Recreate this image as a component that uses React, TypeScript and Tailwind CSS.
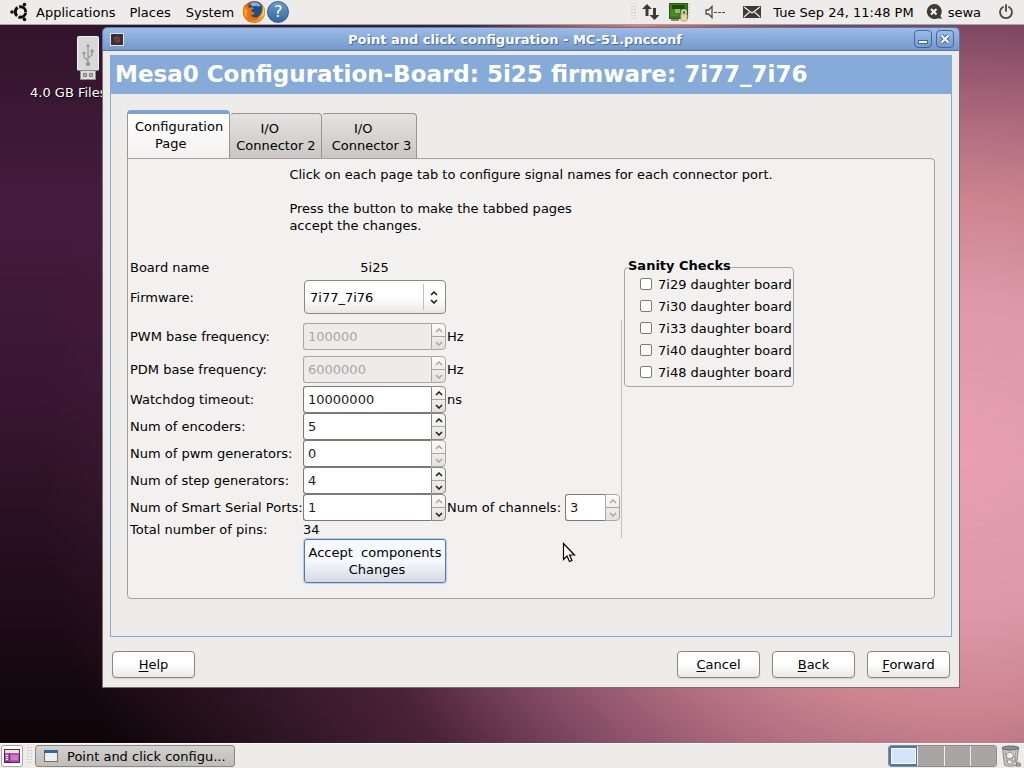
import { useState, type ReactNode } from 'react'

const TABS = ['Configuration\nPage    ', 'I/O   \nConnector 2', 'I/O   \n Connector 3']

const DAUGHTER_BOARDS = ['7i29', '7i30', '7i33', '7i40', '7i48']

function UbuntuIcon() {
  return (
    <svg width="18" height="20" viewBox="0 0 18 20" aria-hidden="true">
      <circle cx="10.5" cy="10" r="5.2" fill="none" stroke="#111" strokeWidth="3" strokeDasharray="9.4 1.5" strokeDashoffset="-0.7" />
      <circle cx="2" cy="10" r="1.8" fill="#111" />
      <circle cx="14.5" cy="2.6" r="1.8" fill="#111" />
      <circle cx="14.5" cy="17.4" r="1.8" fill="#111" />
    </svg>
  )
}

function FirefoxIcon() {
  return (
    <svg width="24" height="24" viewBox="0 0 24 24" aria-hidden="true">
      <circle cx="12" cy="12" r="11" fill="#e2600f" />
      <circle cx="13" cy="9.5" r="8" fill="#1f4e8f" />
      <path d="M8 4c3-3 9-2 11 2-2 0-3 1-4 0s-3 1-5 0z" fill="#7fb4e2" />
      <path d="M20 4c3 4 4 9 1 13-3 5-10 7-15 4 6 1 10-2 11-5 3-2 4-7 3-12z" fill="#f7a81b" />
      <path d="M21.500 7c1 4 1 8-2 11 1-3 2-7 2-11z" fill="#fbe04a" />
      <path d="M3 4c-3 5-3 12 2 16 5 3 11 1 13-3-4 2-8 1-9-2 2 0 3-1 4-2-1-1-3-1-4-2 0-1 2-2 3-3-2-1-4-1-5 0-1-1-1-2 0-3-2 0-3 1-4 2z" fill="#e8730f" />
      <path d="M3 6c-2 5-1 10 3 13-2-4-1-6 0-8-2-1-3-3-3-5z" fill="#f5a32a" />
    </svg>
  )
}

function HelpIcon() {
  return (
    <span className="flex size-[22px] items-center justify-center rounded-full border border-[#2c5f94] bg-linear-to-b from-[#6a9dcb] to-[#33699f] text-base text-white">
      ?
    </span>
  )
}

function TransferIcon() {
  return (
    <svg width="18" height="18" viewBox="0 0 18 18" fill="#3c3b37" aria-hidden="true">
      <path d="M5 1l5 5H6.500v7h-3V6H0z" />
      <path d="M12.500 17l-5-5H11V5h3v7h3.500z" />
    </svg>
  )
}

function BoardIcon() {
  return (
    <svg width="22" height="20" viewBox="0 0 22 20" aria-hidden="true">
      <path d="M19 2h2M19 5h2M19 8h2M19 11h2M19 14h2" stroke="#c4c4c4" />
      <rect x="0.500" y="1.500" width="18" height="15" fill="#3f7d1c" stroke="#2c5a12" />
      <rect x="3" y="3" width="13" height="4" fill="#1c4a0c" />
      <rect x="6" y="7" width="5" height="4" fill="#8fbd5c" />
      <path d="M2 9h3M2 11h3M2 13h7" stroke="#5f9a38" />
      <path d="M2 17h8v2H2z" fill="#8a8b6a" />
      <path d="M13 12v-2a2 2 0 0 1 4 0v2" fill="none" stroke="#ddd" strokeWidth="1.500" />
      <rect x="12" y="12" width="6" height="7" rx="1" fill="#e9d3a5" stroke="#c4a877" />
    </svg>
  )
}

function SpeakerIcon() {
  return (
    <svg width="21" height="14" viewBox="0 0 21 14" fill="none" stroke="#4c4b47" aria-hidden="true">
      <path d="M1 5h2.500L7 1.500v11L3.500 9H1z" strokeWidth="1.300" />
      <path d="M9 7.500h3M13 7.500h3M17 7.500h3" />
    </svg>
  )
}

function MailIcon() {
  return (
    <svg width="18" height="12" viewBox="0 0 18 12" aria-hidden="true">
      <rect width="18" height="12" fill="#3c3b37" />
      <path d="M1 1l8 6 8-6M1 11l5.500-5M17 11l-5.500-5" fill="none" stroke="#edecea" strokeWidth="1.200" />
    </svg>
  )
}

function ChatIcon() {
  return (
    <svg width="17" height="16" viewBox="0 0 17 16" aria-hidden="true">
      <path d="M8 0a7.500 7.500 0 1 0 3 14.500h5.500c-1.500-1-2-2-2-3A7.500 7.500 0 0 0 8 0z" fill="#3c3b37" />
      <path d="M5 5l5.500 5.500M10.500 5L5 10.500" stroke="#fff" strokeWidth="2" />
    </svg>
  )
}

function PowerIcon() {
  return (
    <svg width="16" height="16" viewBox="0 0 16 16" fill="none" stroke="#4a4945" strokeWidth="1.800" strokeLinecap="round" aria-hidden="true">
      <path d="M5 3a6 6 0 1 0 6 0M8 1v6" />
    </svg>
  )
}

function UsbDriveIcon() {
  return (
    <svg width="22" height="45" viewBox="0 0 22 45" aria-hidden="true">
      <rect x="3.500" y="34.500" width="15" height="9" fill="#dcdcdc" stroke="#8d8d8d" />
      <path d="M6.500 37.500h3v3h-3zM12.500 37.500h3v3h-3z" fill="#bbb" stroke="#777" />
      <rect x="0.500" y="0.500" width="21" height="34" rx="1" fill="#d8d8d8" stroke="#f4f4f4" />
      <path d="M1 34.500h20" stroke="#8d8d8d" />
      <g fill="none" stroke="#999" strokeWidth="1.300">
        <path d="M11 28V10M11 25l-4-4v-4M11 22l4-3v-4" />
      </g>
      <g fill="#999">
        <circle cx="11" cy="28" r="2.200" />
        <circle cx="7" cy="17" r="1.600" />
        <path d="M11 7l2 4H9zM13.500 13.500h3v3h-3z" />
      </g>
    </svg>
  )
}

function ShowDesktopIcon() {
  return (
    <svg width="16" height="14" viewBox="0 0 16 14" aria-hidden="true">
      <rect x="0.500" y="0.500" width="15" height="13" fill="#b24fb0" stroke="#5b2459" />
      <rect x="1" y="1" width="14" height="3" fill="#e8e4cf" />
      <path d="M2 6h2v1H2zM2 8h2v1H2zM2 10h2v1H2z" fill="#fff" />
      <path d="M5.500 4v8.500H1" fill="none" stroke="#7c317a" />
      <rect x="7" y="6" width="7" height="5" fill="#cb7ac9" />
    </svg>
  )
}

function TaskWindowIcon() {
  return (
    <svg width="14" height="12" viewBox="0 0 14 12" aria-hidden="true">
      <rect x="0.500" y="0.500" width="13" height="11" fill="#eeeeec" stroke="#6e6e6a" />
      <rect width="14" height="3" fill="#3465a4" />
    </svg>
  )
}

function TrashIcon() {
  return (
    <svg width="20" height="22" viewBox="0 0 20 22" aria-hidden="true">
      <path d="M1.500 3l2 17c3 1.500 9 1.500 12 0l2-17z" fill="#c9cac7" stroke="#8a8b88" />
      <path d="M5 9l4-2 4 3-3 4-4-1zM6 15l4 0 2 4-5 0zM12 12l3 1-1 4-3-2z" fill="#edeeec" stroke="#969794" />
      <path d="M4 6l2 12M15 6l-2 12M9 6v2" stroke="#9fa09d" />
      <ellipse cx="9.500" cy="3" rx="8.500" ry="2" fill="#8f908d" stroke="#666" />
      <path d="M15 21l1-3 3 0 0.500 3z" fill="#b5b6b3" stroke="#777" />
    </svg>
  )
}

function Grip() {
  return (
    <svg width="5" height="18" viewBox="0 0 5 18" aria-hidden="true">
      <path d="M1 0v18M4 0v18" stroke="#b5b3b0" strokeDasharray="1 2" />
    </svg>
  )
}

function Chevron({ up, dim }: { up?: boolean; dim?: boolean }) {
  return (
    <svg width="8" height="5" viewBox="0 0 8 5" fill="none" stroke={dim ? '#a9a7a4' : '#1c1c1c'} strokeWidth="1.500" aria-hidden="true">
      <path d={up ? 'M1 4l3-3 3 3' : 'M1 1l3 3 3-3'} />
    </svg>
  )
}

function SpinBox({
  id,
  value,
  disabled,
  upDim,
  downDim,
  className,
}: {
  id: string
  value: string
  disabled?: boolean
  upDim?: boolean
  downDim?: boolean
  className: string
}) {
  return (
    <div className={`flex h-[27px] ${className}`}>
      <input
        id={id}
        type="text"
        defaultValue={value}
        disabled={disabled}
        className={`min-w-0 flex-1 rounded-l-[3px] border border-r-0 px-1 ${
          disabled ? 'border-[#a9a7a4] bg-[#edecea] text-[#a9a7a4]' : 'border-[#7d7974] bg-white text-[#1c1c1c]'
        }`}
      />
      <div
        className={`flex w-[15px] flex-col rounded-r-[4px] border bg-linear-to-b from-[#fbfbfa] to-[#e2e1df] ${
          upDim && downDim ? 'border-[#a9a7a4]' : 'border-[#8b8783]'
        }`}
      >
        <button type="button" aria-label="Increase" disabled={upDim} className="flex flex-1 items-center justify-center">
          <Chevron up dim={upDim} />
        </button>
        <button
          type="button"
          aria-label="Decrease"
          disabled={downDim}
          className="flex flex-1 items-center justify-center border-t border-[#a9a7a4]"
        >
          <Chevron dim={downDim} />
        </button>
      </div>
    </div>
  )
}

function SpinRow({
  id,
  label,
  unit,
  className = '',
  children,
  ...spin
}: {
  id: string
  label: string
  value: string
  unit?: string
  disabled?: boolean
  upDim?: boolean
  downDim?: boolean
  className?: string
  children?: ReactNode
}) {
  return (
    <div className={`flex items-center ${className}`}>
      <label htmlFor={id} className="w-[173px] shrink-0 whitespace-nowrap">
        {label}
      </label>
      <SpinBox id={id} className="w-[143px] shrink-0" {...spin} />
      {unit && <span className="ml-px">{unit}</span>}
      {children}
    </div>
  )
}

function WizardButton({ label }: { label: string }) {
  return (
    <button
      type="button"
      className="h-[27px] w-[83px] rounded-[4px] border border-[#8b8783] bg-linear-to-b from-white from-50% to-[#e9e8e6] shadow-[0_1px_1px_#d6d4d1]"
    >
      <span className="underline underline-offset-2">{label[0]}</span>
      {label.slice(1)}
    </button>
  )
}

function TopPanel() {
  return (
    <header className="flex h-[25px] shrink-0 items-center border-b border-[#a5a39f] bg-[#edecea] px-[10px]">
      <nav className="flex items-center">
        <UbuntuIcon />
        <button type="button" className="ml-2">Applications</button>
        <button type="button" className="ml-[14px]">Places</button>
        <button type="button" className="ml-[15px]">System</button>
        <button type="button" aria-label="Firefox" className="ml-2"><FirefoxIcon /></button>
        <button type="button" aria-label="Help" className="ml-px"><HelpIcon /></button>
      </nav>
      <div className="ml-auto flex items-center">
        <Grip />
        <span className="ml-[6px]"><TransferIcon /></span>
        <span className="ml-[9px]"><BoardIcon /></span>
        <span className="ml-[14px]"><SpeakerIcon /></span>
        <span className="ml-[17px]"><MailIcon /></span>
        <span className="ml-3">Tue Sep 24, 11:48 PM</span>
        <span className="ml-3"><ChatIcon /></span>
        <span className="ml-[5px]">sewa</span>
        <button type="button" aria-label="Power" className="ml-[17px]"><PowerIcon /></button>
      </div>
    </header>
  )
}

function TitleBar() {
  const button =
    'flex size-[18px] items-center justify-center rounded-[4px] border border-[#40699c] bg-linear-to-b from-[#9dbde6] to-[#7399cc]'
  return (
    <div className="flex h-6 shrink-0 items-center gap-1 rounded-t-[5px] border border-[#5079ad] bg-linear-to-b from-[#9cbce6] to-[#7599cc] pr-[5px] pl-[7px]">
      <svg width="14" height="13" viewBox="0 0 14 13" aria-hidden="true">
        <rect x="0.500" y="0.500" width="13" height="12" fill="#333" stroke="#e4e1dc" />
        <circle cx="7" cy="6.500" r="2.500" fill="none" stroke="#d03a3a" />
        <path d="M5.200 4.700l3.600 3.600" stroke="#d03a3a" />
      </svg>
      <h2 className="flex-1 pr-2 text-center font-bold text-white [text-shadow:1px_1px_1px_#3f689b]">
        Point and click configuration - MC-51.pncconf
      </h2>
      <button type="button" aria-label="Minimize" className={button}>
        <svg width="10" height="10" viewBox="0 0 10 10" aria-hidden="true">
          <rect x="0.500" y="6.500" width="9" height="3" fill="#fff" stroke="#40699c" />
        </svg>
      </button>
      <button type="button" aria-label="Close" className={button}>
        <svg width="10" height="10" viewBox="0 0 10 10" aria-hidden="true">
          <path d="M1.500 1.500l7 7M8.500 1.500l-7 7" stroke="#40699c" strokeWidth="4" />
          <path d="M1.500 1.500l7 7M8.500 1.500l-7 7" stroke="#fff" strokeWidth="2" />
        </svg>
      </button>
    </div>
  )
}

function TabBar({ active, onSelect }: { active: number; onSelect: (i: number) => void }) {
  return (
    <div role="tablist" className="flex items-end">
      {TABS.map((tab, i) => (
        <button
          key={tab}
          type="button"
          role="tab"
          aria-selected={i === active}
          onClick={() => onSelect(i)}
          className={`rounded-t-[4px] border leading-[17px] whitespace-pre ${
            i === active
              ? '-mb-px h-[49px] border-t-4 border-x-[#979592] border-t-[#7ba3d6] border-b-transparent bg-linear-to-b from-white to-[#f2f1ef] pr-[6px] pb-[3px] pl-[7px]'
              : 'h-[45px] border-b-0 border-[#979592] border-l-transparent bg-linear-to-b from-[#e4e3e1] to-[#c9c7c4] px-[5px] pt-[2px]'
          }`}
        >
          {tab}
        </button>
      ))}
    </div>
  )
}

function BoardForm() {
  return (
    <div className="w-[491px] shrink-0">
      <div className="flex h-[18px] items-center">
        <span className="w-[173px]">Board name</span>
        <span className="w-[143px] text-center">5i25</span>
      </div>
      <div className="mt-1 flex items-center">
        <label htmlFor="firmware" className="w-[174px]">Firmware:</label>
        <div className="relative w-[142px]">
          <select
            id="firmware"
            className="h-[34px] w-full appearance-none rounded-[4px] border border-[#8b8783] bg-linear-to-b from-white from-50% to-[#e9e8e6] px-[5px]"
          >
            <option>7i77_7i76</option>
          </select>
          <span className="pointer-events-none absolute inset-y-1 right-2 flex flex-col items-center justify-center gap-[3px] border-l border-[#c2c0bd] pl-[6px]">
            <Chevron up />
            <Chevron />
          </span>
        </div>
      </div>
      <SpinRow id="pwm-base" label="PWM base frequency:" value="100000" unit="Hz" disabled upDim downDim className="mt-[9px]" />
      <SpinRow id="pdm-base" label="PDM base frequency:" value="6000000" unit="Hz" disabled upDim downDim className="mt-[6px]" />
      <SpinRow id="watchdog" label="Watchdog timeout:" value="10000000" unit="ns" className="mt-[3px]" />
      <SpinRow id="encoders" label="Num of encoders:" value="5" />
      <SpinRow id="pwm-gens" label="Num of pwm generators:" value="0" upDim downDim />
      <SpinRow id="step-gens" label="Num of step generators:" value="4" />
      <SpinRow id="serial-ports" label="Num of Smart Serial Ports:" value="1" upDim>
        <label htmlFor="channels" className="ml-px whitespace-nowrap">Num of channels:</label>
        <SpinBox id="channels" value="3" upDim downDim className="mr-px ml-auto w-[55px]" />
      </SpinRow>
      <div className="flex h-[17px] items-center">
        <span className="w-[173px]">Total number of pins:</span>
        <output>34</output>
      </div>
      <button
        type="button"
        className="mt-px ml-[174px] h-[44px] w-[142px] rounded-[3px] border border-[#5079ad] bg-linear-to-b from-[#f6f9fd] from-50% to-[#d5d9e0] leading-[17px] whitespace-pre shadow-[0_0_1px_1px_#b9cde8]"
      >
        {'Accept  components\n Changes'}
      </button>
    </div>
  )
}

function SanityChecks() {
  return (
    <fieldset className="h-[129px] shrink-0 rounded-[4px] border border-[#a9a7a4] pr-px pl-[3px]">
      <legend className="h-[18px] leading-[15px] font-bold">Sanity Checks</legend>
      <div className="-mt-[3px]">
        {DAUGHTER_BOARDS.map((board) => (
          <label key={board} className="flex h-[22px] items-center gap-[6px] pl-3">
            <input type="checkbox" className="size-3 appearance-none rounded-[2px] border border-[#7d7974] bg-white" />
            {board} daughter board
          </label>
        ))}
      </div>
    </fieldset>
  )
}

function ConfigWindow() {
  const [tab, setTab] = useState(0)

  return (
    <main className="absolute top-[2px] right-[64px] bottom-[55px] left-[102px] flex flex-col">
      <TitleBar />
      <div className="flex flex-1 flex-col border border-t-0 border-[#75736f] bg-[#edecea] px-[7px] pt-1 pb-[9px]">
        <section className="flex flex-1 flex-col border border-[#86abd9]">
          <h1 className="flex h-[38px] items-center bg-[#86abd9] pb-[2px] pl-1 text-[23px] font-bold whitespace-nowrap text-white">
            Mesa0 Configuration-Board: 5i25 firmware: 7i77_7i76
          </h1>
          <div className="flex flex-1 flex-col px-4 pt-4 pb-[37px]">
            <TabBar active={tab} onSelect={setTab} />
            <div role="tabpanel" className="flex-1 rounded-[4px] rounded-tl-none border border-[#a3a19e] bg-[#f2f1ef] px-[2px] pt-[7px]">
              <div className="mx-auto w-fit leading-[17px]">
                <p>Click on each page tab to configure signal names for each connector port.</p>
                <p className="mt-[17px]">
                  Press the button to make the tabbed pages
                  <br />
                  accept the changes.
                </p>
              </div>
              <form className="mt-6 flex items-start">
                <BoardForm />
                <div className="mt-[62px] mr-[2px] h-[218px] w-px bg-[#c2c0bd]" />
                <SanityChecks />
              </form>
            </div>
          </div>
        </section>
        <footer className="mt-[14px] flex gap-3 px-[2px]">
          <WizardButton label="Help" />
          <span className="flex-1" />
          <WizardButton label="Cancel" />
          <WizardButton label="Back" />
          <WizardButton label="Forward" />
        </footer>
      </div>
    </main>
  )
}

function BottomPanel() {
  return (
    <footer className="flex h-[25px] shrink-0 items-center border-t border-white bg-[#edecea] pr-[3px] pl-px">
      <button
        type="button"
        aria-label="Show desktop"
        className="flex h-[22px] w-[22px] items-center justify-center rounded-[3px] border border-[#a9a7a4] bg-white"
      >
        <ShowDesktopIcon />
      </button>
      <span className="ml-1"><Grip /></span>
      <button
        type="button"
        className="ml-[3px] flex h-[22px] w-[200px] items-center gap-[9px] rounded-[3px] border border-[#8b8783] bg-linear-to-b from-[#d3d1ce] to-[#bfbdba] pl-2"
      >
        <TaskWindowIcon />
        Point and click configu...
      </button>
      <div className="ml-auto flex h-[22px] w-[109px] gap-px overflow-hidden rounded-[3px] border border-[#8f8d8a] bg-[#edecea]">
        <button type="button" aria-label="Workspace 1" className="flex-1 border-2 border-r border-[#4a76ab] bg-[#d3e3f8] ring-1 ring-white ring-inset" />
        <button type="button" aria-label="Workspace 2" className="flex-1 bg-[#a9a5a2]" />
        <button type="button" aria-label="Workspace 3" className="flex-1 bg-[#a9a5a2]" />
        <button type="button" aria-label="Workspace 4" className="flex-1 bg-[#a9a5a2]" />
      </div>
      <button type="button" aria-label="Trash" className="ml-1"><TrashIcon /></button>
    </footer>
  )
}

export default function App() {
  return (
    <div className="flex h-screen min-h-[768px] flex-col font-['DejaVu_Sans',sans-serif] text-[13px] leading-[17px] text-black">
      <TopPanel />
      <div className="relative flex-1 overflow-hidden bg-[radial-gradient(ellipse_60%_72%_at_94%_60%,#e8a0b0_0%,#de98a8_30%,#cb848e_50%,#b06c80_64%,#7d4660_84%,#4a2238_102%,transparent_150%),linear-gradient(180deg,#32142b_0%,#451c3e_25%,#3a1633_50%,#220d1c_78%,#0d0508_100%)]">
        <div className="absolute top-0 left-[45%] h-[2px] w-[35%] bg-linear-to-r from-transparent via-[#fb6d62] to-transparent" />
        <div className="absolute top-[11px] left-[30px] flex flex-col items-center gap-[3px] text-white [text-shadow:1px_1px_1px_#000]">
          <UsbDriveIcon />
          4.0 GB Filesystem
        </div>
        <ConfigWindow />
        <svg className="pointer-events-none absolute top-[517px] left-[562px]" width="14" height="22" viewBox="0 0 14 22" aria-hidden="true">
          <path d="M1.500 1.500v16l3.500-3.500 2.500 5.500 2.500-1-2.500-5.500h5z" fill="#fff" stroke="#000" strokeWidth="1.200" />
        </svg>
      </div>
      <BottomPanel />
    </div>
  )
}
